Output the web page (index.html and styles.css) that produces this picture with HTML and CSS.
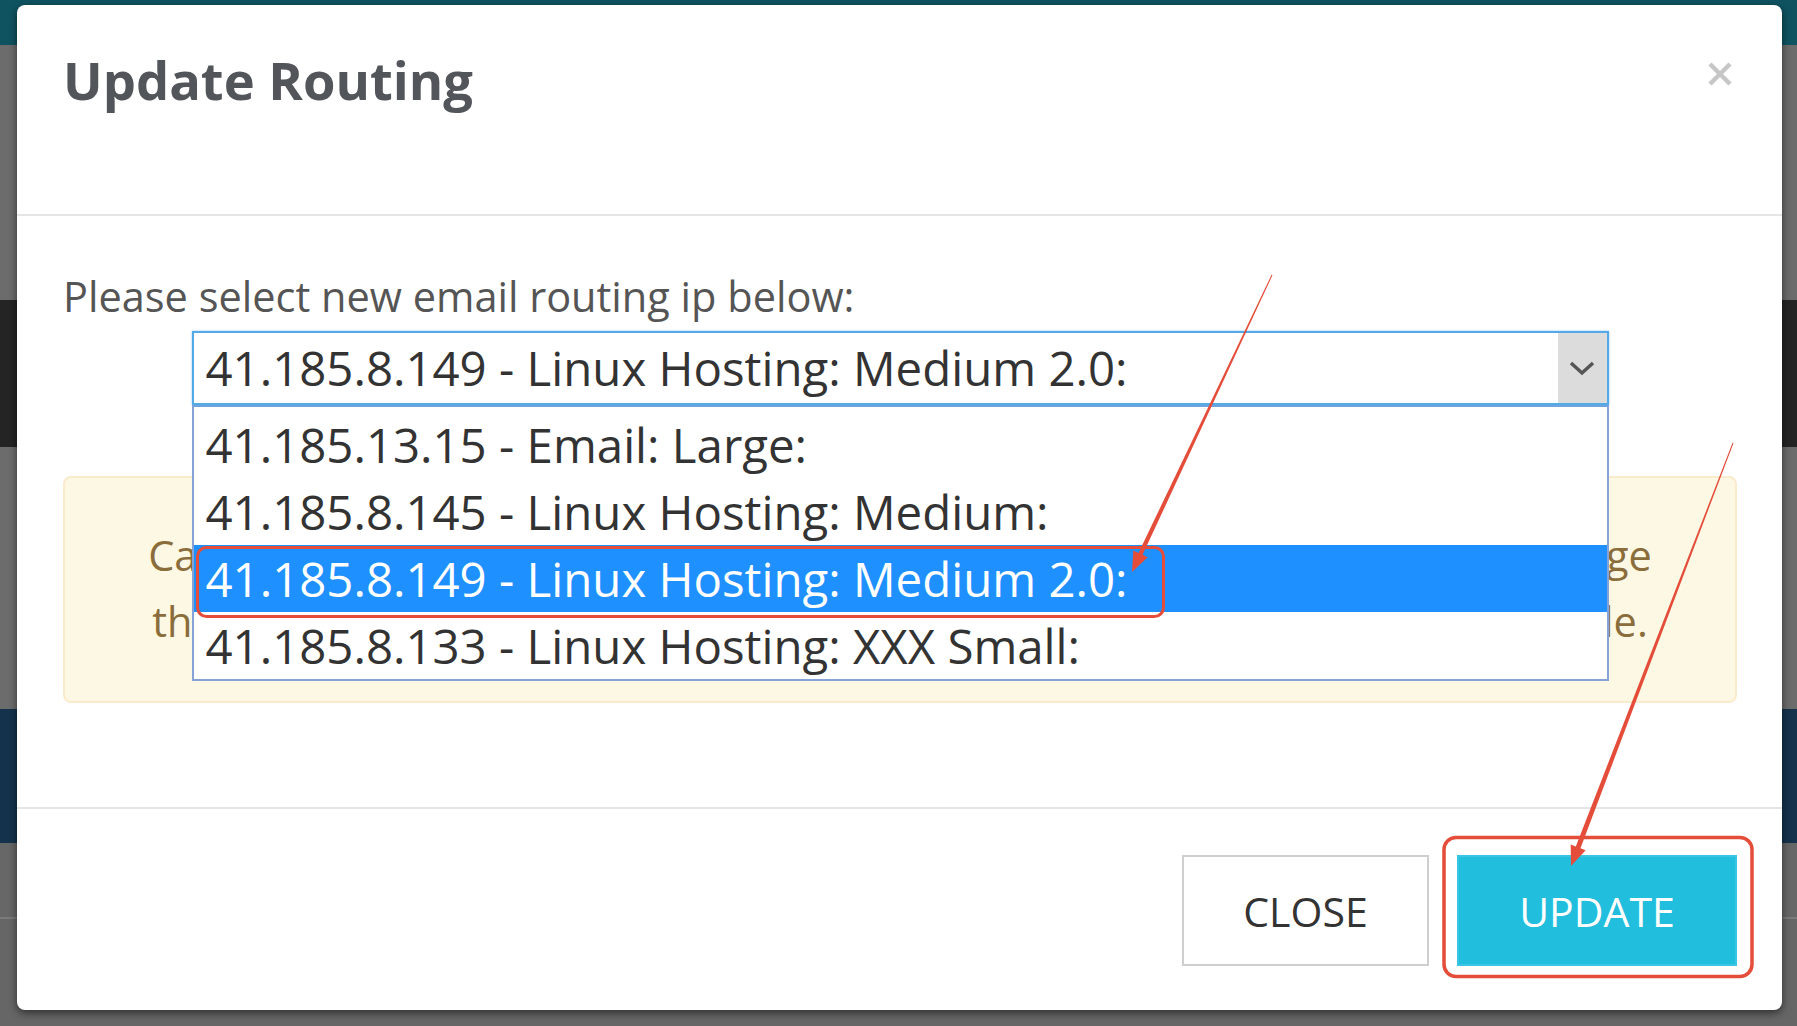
FILE: index.html
```html
<!DOCTYPE html>
<html lang="en">
<head>
<meta charset="utf-8">
<title>Update Routing</title>
<link rel="stylesheet" href="styles.css">
</head>
<body>
<div class="modal">
  <div class="modal-header">
    <h4 class="modal-title">Update Routing</h4>
    <button class="close" aria-label="Close">
      <svg width="26" height="26" viewBox="0 0 26 26"><path d="M3 3 L23 23 M23 3 L3 23" stroke="#c6c6c6" stroke-width="4.5" stroke-linecap="butt" fill="none"/></svg>
    </button>
  </div>
  <div class="modal-body">
    <p class="field-label">Please select new email routing ip below:</p>
    <div class="select-wrap">
      <div class="select">
        <span class="select-value">41.185.8.149 - Linux Hosting: Medium 2.0:</span>
        <span class="select-arrow">
          <svg width="26" height="16" viewBox="0 0 26 16"><path d="M2 3 L13 13 L24 3" stroke="#555" stroke-width="3.5" fill="none"/></svg>
        </span>
      </div>
      <ul class="options">
        <li class="option">41.185.13.15 - Email: Large:</li>
        <li class="option">41.185.8.145 - Linux Hosting: Medium:</li>
        <li class="option selected">41.185.8.149 - Linux Hosting: Medium 2.0:</li>
        <li class="option">41.185.8.133 - Linux Hosting: XXX Small:</li>
      </ul>
    </div>
    <div class="alert">Caution: updating the routing ip will reroute email. Please confirm this change<br>the domain DNS and mail servers need time to update. This may take a while.</div>
  </div>
  <div class="modal-footer">
    <button class="btn btn-default">CLOSE</button>
    <button class="btn btn-info">UPDATE</button>
  </div>
</div>
<svg class="annotations" width="1797" height="1026" viewBox="0 0 1797 1026">
  <rect x="197.5" y="547.5" width="966" height="69" rx="9" fill="none" stroke="#e44d3a" stroke-width="3"/>
  <rect x="1444" y="837.5" width="308" height="139" rx="12" fill="none" stroke="#e44d3a" stroke-width="3.5"/>
  <polygon points="1272.45,275.21 1271.55,274.79 1138.49,552.95 1133.29,550.5 1132,572 1147.77,557.32 1142.57,554.87" fill="#e44d3a"/>
  <polygon points="1733.47,443.18 1732.53,442.82 1575.82,846.43 1570.68,844.46 1571,866 1585.62,850.18 1580.48,848.21" fill="#e44d3a"/>
</svg>
</body>
</html>
```
FILE: styles.css
```css
* { box-sizing: border-box; }
html, body { margin: 0; }
body {
  width: 1797px;
  height: 1026px;
  overflow: hidden;
  padding: 5px 15px 0 17px;
  font-family: "Open Sans", "Noto Sans", sans-serif;
  background: linear-gradient(to bottom,
    #0f5361 0 45px,
    #6c6c6c 45px 300px,
    #242424 300px 447px,
    #6c6c6c 447px 709px,
    #15324c 709px 843px,
    #676767 843px 917px,
    #7b7b7b 917px 919px,
    #666666 919px);
  position: relative;
}
.modal {
  width: 1765px;
  background: #fff;
  border-radius: 8px;
  box-shadow: 0 3px 9px rgba(0,0,0,.55);
}
.modal-header {
  display: flex;
  justify-content: space-between;
  align-items: flex-start;
  padding: 44px 49px 103px 46px;
  border-bottom: 2px solid #e5e5e5;
}
.modal-title {
  margin: 0;
  font-size: 52.5px;
  line-height: 62px;
  font-weight: 700;
  color: #52555a;
}
.close {
  margin-top: 12px;
  padding: 0;
  border: 0;
  background: none;
  width: 26px;
  height: 26px;
  display: block;
}
.close svg { display: block; }
.modal-body {
  padding: 47px 45px 104px 46px;
}
.field-label {
  margin: 0 0 2px;
  font-size: 41.5px;
  line-height: 66px;
  color: #555;
}
.select-wrap {
  position: relative;
  width: 1417px;
  margin: 0 auto;
}
.select {
  height: 74px;
  border: 2px solid #53aae6;
  box-shadow: 0 0 2px rgba(102,175,233,.7);
  background: #fff;
  display: flex;
  justify-content: space-between;
  align-items: stretch;
}
.select-value {
  padding-left: 12px;
  font-size: 47.4px;
  line-height: 70px;
  color: #333;
  white-space: nowrap;
}
.select-arrow {
  width: 49px;
  background: #dcdcdc;
  display: flex;
  align-items: center;
  justify-content: center;
}
.select-arrow svg { display: block; }
.options {
  position: absolute;
  top: 100%;
  left: 0;
  right: 0;
  margin: 0;
  padding: 4px 0 0;
  list-style: none;
  background: #fff;
  border: 2px solid #86a2d6;
  border-top-color: #6ea4dc;
  z-index: 2;
}
.option {
  height: 67px;
  padding-left: 12px;
  font-size: 47.4px;
  line-height: 67px;
  color: #333;
  white-space: nowrap;
}
.option.selected {
  background: #1e90ff;
  color: #fff;
}
.alert {
  margin-top: 71px;
  padding: 44px 20px 47px;
  border: 2px solid #faebcc;
  border-radius: 8px;
  background: #fcf8e3;
  color: #8a6d3b;
  font-size: 41.5px;
  line-height: 66px;
  text-align: center;
  white-space: nowrap;
}
.modal-footer {
  display: flex;
  justify-content: flex-end;
  gap: 28px;
  padding: 46px 45px 44px;
  border-top: 2px solid #e5e5e5;
}
.btn {
  height: 111px;
  font-family: "Open Sans", "Noto Sans", sans-serif;
  font-size: 41px;
  padding: 0;
  border-radius: 0;
  cursor: pointer;
}
.btn-default {
  width: 247px;
  background: #fff;
  color: #333;
  border: 2px solid #cfcfcf;
}
.btn-info {
  width: 280px;
  background: #21bedd;
  color: #fff;
  border: 2px solid #3ac6e2;
}
.annotations {
  position: absolute;
  left: 0;
  top: 0;
  pointer-events: none;
  z-index: 5;
}
```
